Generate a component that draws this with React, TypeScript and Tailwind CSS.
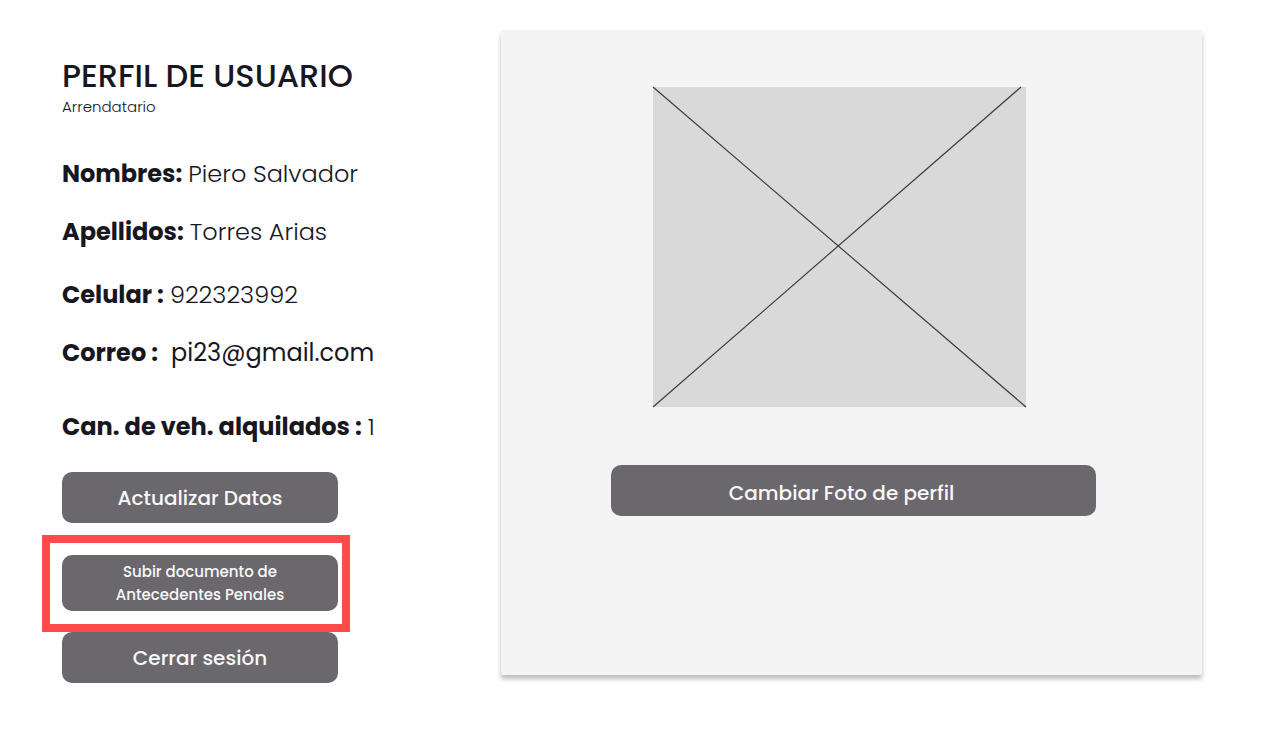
const fields = [
  { label: 'Nombres:', value: 'Piero Salvador', row: 'mt-[38px]', tone: 'ml-1.5 font-light' },
  { label: 'Apellidos:', value: 'Torres Arias', row: 'mt-[22px]', tone: 'ml-1.5 font-light' },
  { label: 'Celular :', value: '922323992', row: 'mt-[27px]', tone: 'ml-1.5 font-light' },
  { label: 'Correo :', value: 'pi23@gmail.com', row: 'mt-[22px]', tone: 'ml-[13px] font-normal' },
  { label: 'Can. de veh. alquilados :', value: '1', row: 'mt-[38px]', tone: 'ml-1.5 font-light' },
];

const buttonBase = 'block w-full rounded-[10px] bg-[#6b686d] font-medium text-[#f8f8f8]';

function PhotoPlaceholder() {
  return (
    <div className="mr-[70px] ml-[42px] h-80 bg-[#d9d9d9]">
      <svg
        className="block h-full w-full overflow-visible"
        viewBox="0 0 373 320"
        preserveAspectRatio="none"
        role="img"
        aria-label="Foto de perfil"
      >
        <path d="M0 0L373 320M0 320L368 0" stroke="#3d3d3d" strokeWidth="1.2" fill="none" />
      </svg>
    </div>
  );
}

export default function App() {
  return (
    <main className="flex min-h-screen items-start bg-[#fefefe] pt-[30px] pr-[78px] pb-16 pl-[62px] font-[Poppins,Inter,sans-serif] text-[#17171f]">
      <section className="w-[439px] shrink-0 pt-7">
        <h1 className="text-[32px] leading-9 font-medium whitespace-nowrap">PERFIL DE USUARIO</h1>
        <p className="mt-0.5 text-[15px] leading-[22px] font-light">Arrendatario</p>

        <dl className="text-2xl leading-9 whitespace-nowrap">
          {fields.map((field) => (
            <div key={field.label} className={`flex ${field.row}`}>
              <dt className="font-bold">{field.label}</dt>
              <dd className={field.tone}>{field.value}</dd>
            </div>
          ))}
        </dl>

        <div className="mt-[27px] w-[276px]">
          <button type="button" className={`${buttonBase} h-[51px] text-xl`}>
            Actualizar Datos
          </button>
          <div className="relative mt-8">
            <button type="button" className={`${buttonBase} h-14 text-[15px] leading-[23px]`}>
              Subir documento de
              <br />
              Antecedentes Penales
            </button>
            <div className="pointer-events-none absolute -top-5 -right-3 -bottom-[21px] -left-5 border-8 border-[#fd4b4b]" />
          </div>
          <button type="button" className={`${buttonBase} mt-[21px] h-[51px] text-xl`}>
            Cerrar sesión
          </button>
        </div>
      </section>

      <section className="min-w-0 flex-1 rounded-[2px] bg-[#f4f4f4] pt-[57px] pr-[106px] pb-[159px] pl-[110px] shadow-[0_4px_4px_rgba(0,0,0,0.25)]">
        <PhotoPlaceholder />
        <button type="button" className={`${buttonBase} mt-[58px] h-[51px] pt-1 pr-6 text-xl`}>
          Cambiar Foto de perfil
        </button>
      </section>
    </main>
  );
}
